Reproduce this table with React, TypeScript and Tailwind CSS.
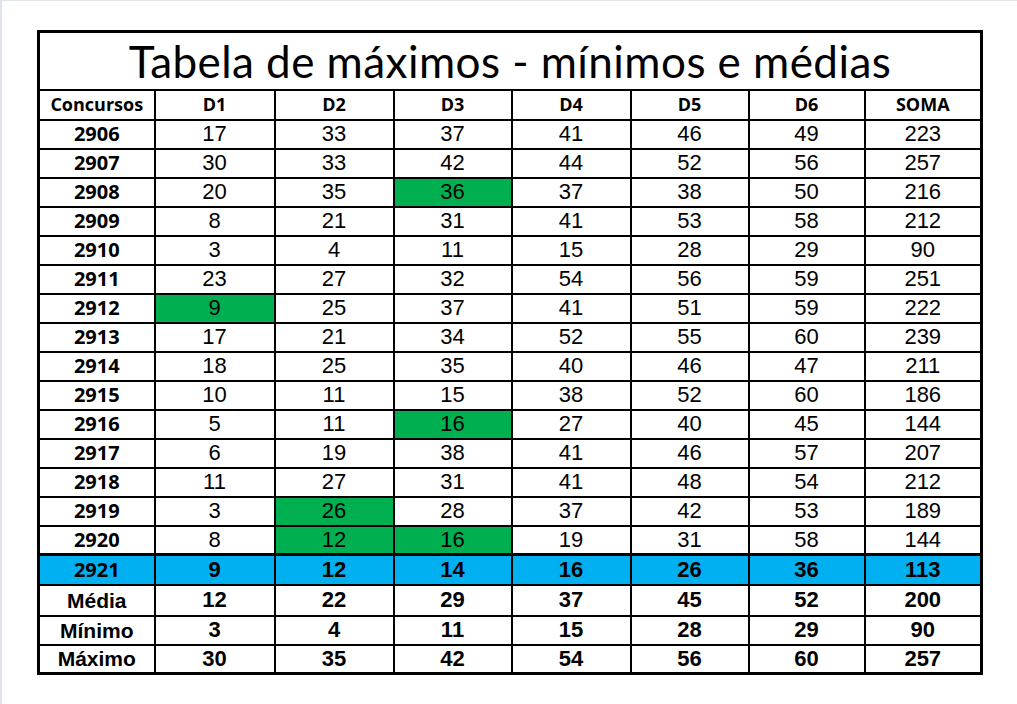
import React from 'react';

type Row = { id: string; vals: number[]; green?: number[] };

const rows: Row[] = [
  { id: '2906', vals: [17, 33, 37, 41, 46, 49, 223] },
  { id: '2907', vals: [30, 33, 42, 44, 52, 56, 257] },
  { id: '2908', vals: [20, 35, 36, 37, 38, 50, 216], green: [2] },
  { id: '2909', vals: [8, 21, 31, 41, 53, 58, 212] },
  { id: '2910', vals: [3, 4, 11, 15, 28, 29, 90] },
  { id: '2911', vals: [23, 27, 32, 54, 56, 59, 251] },
  { id: '2912', vals: [9, 25, 37, 41, 51, 59, 222], green: [0] },
  { id: '2913', vals: [17, 21, 34, 52, 55, 60, 239] },
  { id: '2914', vals: [18, 25, 35, 40, 46, 47, 211] },
  { id: '2915', vals: [10, 11, 15, 38, 52, 60, 186] },
  { id: '2916', vals: [5, 11, 16, 27, 40, 45, 144], green: [2] },
  { id: '2917', vals: [6, 19, 38, 41, 46, 57, 207] },
  { id: '2918', vals: [11, 27, 31, 41, 48, 54, 212] },
  { id: '2919', vals: [3, 26, 28, 37, 42, 53, 189], green: [1] },
  { id: '2920', vals: [8, 12, 16, 19, 31, 58, 144], green: [1, 2] },
];

const current = { id: '2921', vals: [9, 12, 14, 16, 26, 36, 113] };

const summary = [
  { label: 'Média', vals: [12, 22, 29, 37, 45, 52, 200] },
  { label: 'Mínimo', vals: [3, 4, 11, 15, 28, 29, 90] },
  { label: 'Máximo', vals: [30, 35, 42, 54, 56, 60, 257] },
];

const headers = ['D1', 'D2', 'D3', 'D4', 'D5', 'D6', 'SOMA'];
const widths = [116, 120, 119, 118, 119, 118, 116, 117];

const calibri = "font-['Open_Sans',sans-serif]";
const arial = "font-['Liberation_Sans',Arial,sans-serif]";

export default function App() {
  return (
    <div className="min-h-[704px] w-[1017px] bg-white border-t border-l-2 border-[#dfe4ea] pt-[29px] pl-[35px]">
      <table className="table-fixed border-collapse border-[3px] border-black text-black">
        <colgroup>
          {widths.map((w, i) => (
            <col key={i} style={{ width: w }} />
          ))}
        </colgroup>
        <tbody>
          <tr className="h-[58px]">
            <td colSpan={8} className="border-2 border-black text-center">
              <span className="font-['Lato',sans-serif] text-[44px] leading-none tracking-[0.45px] relative top-[1px]">
                Tabela de máximos - mínimos e médias
              </span>
            </td>
          </tr>
          <tr className={`h-[30px] ${calibri} font-bold text-[18px]`}>
            <td className="border-2 border-black text-center">Concursos</td>
            {headers.map((h) => (
              <td key={h} className="border-2 border-black text-center">
                {h}
              </td>
            ))}
          </tr>
          {rows.map((r) => (
            <tr key={r.id} className="h-[29px]">
              <td className={`border-2 border-black text-center ${calibri} font-bold text-[20px] leading-none`}>
                {r.id}
              </td>
              {r.vals.map((v, i) => (
                <td
                  key={i}
                  className={`border-2 border-black text-center ${arial} text-[22px] leading-none ${
                    r.green?.includes(i) ? 'bg-[#00b050]' : ''
                  }`}
                >
                  {v}
                </td>
              ))}
            </tr>
          ))}
          <tr className="h-[30px] bg-[#00b0f0] border-t-[3px] border-black">
            <td className={`border-2 border-black text-center ${calibri} font-bold text-[20px] leading-none`}>
              {current.id}
            </td>
            {current.vals.map((v, i) => (
              <td key={i} className={`border-2 border-black text-center ${arial} font-bold text-[22px] leading-none`}>
                {v}
              </td>
            ))}
          </tr>
          {summary.map((s, idx) => (
            <tr key={s.label} className={idx === 0 ? 'h-[31px]' : 'h-[29px]'}>
              <td className={`border-2 border-black text-center ${arial} font-bold text-[21px] leading-none`}>
                {s.label}
              </td>
              {s.vals.map((v, i) => (
                <td key={i} className={`border-2 border-black text-center ${arial} font-bold text-[22px] leading-none`}>
                  {v}
                </td>
              ))}
            </tr>
          ))}
        </tbody>
      </table>
    </div>
  );
}
